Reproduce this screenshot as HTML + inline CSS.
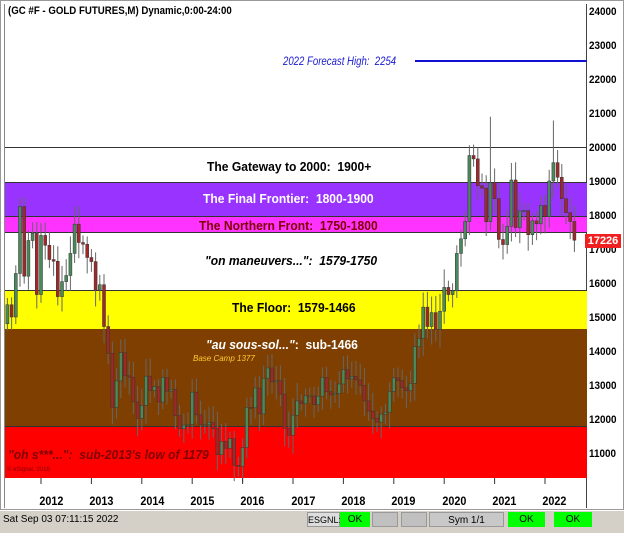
<!DOCTYPE html>
<html><head><style>
body{margin:0;width:624px;height:532px;overflow:hidden;background:#fff;font-family:"Liberation Sans",Arial,sans-serif;position:relative}
.a{position:absolute}
.band{position:absolute;left:5px;width:582px}
.t{position:absolute;font-weight:bold;font-size:13px;white-space:nowrap;transform:scaleX(.93);transform-origin:left}
.pl{position:absolute;left:589px;font-size:11px;font-weight:bold;transform:scaleX(.9);transform-origin:left}
.yl{position:absolute;top:494px;font-size:12px;font-weight:bold;transform:scaleX(.9)}
.sb{position:absolute;top:512px;height:15px;font-size:10px;line-height:15px;text-align:center;box-sizing:border-box}
</style></head><body>
<div class="a" style="left:0;top:0;width:624px;height:510px;border:1px solid #999;box-sizing:border-box"></div>
<div class="a" style="left:4px;top:4px;width:1px;height:504px;background:#888"></div>
<div class="a" style="left:586px;top:4px;width:1px;height:504px;background:#444"></div>
<div class="band" style="top:147px;height:1px;background:#333"></div>
<div class="band" style="top:182px;height:34px;background:#9933ff;border-top:1px solid #333;box-sizing:border-box"></div>
<div class="band" style="top:216px;height:17px;background:#ff33ff;border-top:1px solid #333;border-bottom:1px solid #333;box-sizing:border-box"></div>
<div class="band" style="top:290px;height:39px;background:#ffff00;border-top:1px solid #333;box-sizing:border-box"></div>
<div class="band" style="top:329px;height:98px;background:#7f3f00"></div>
<div class="band" style="top:426px;height:52px;background:#ff0000;border-top:1px solid #333;box-sizing:border-box"></div>
<svg class="a" style="left:0;top:0" width="624" height="532" id="sv">
<line x1="415" y1="61" x2="587" y2="61" stroke="#1010d0" stroke-width="2"/>
</svg>
<div class="a" style="left:8px;top:5px;font-size:11px;font-weight:bold;transform:scaleX(.88);transform-origin:left">(GC #F - GOLD FUTURES,M) Dynamic,0:00-24:00</div>
<div class="a" style="left:283px;top:54px;font-size:12px;font-style:italic;color:#1a1ad0;transform:scaleX(.8);transform-origin:left">2022 Forecast High:&nbsp; 2254</div>
<div class="t" style="left:207px;top:159px">The Gateway to 2000:&nbsp; 1900+</div>
<div class="t" style="left:203px;top:191px;color:#fff">The Final Frontier:&nbsp; 1800-1900</div>
<div class="t" style="left:199px;top:218px;color:#7f0000">The Northern Front:&nbsp; 1750-1800</div>
<div class="t" style="left:205px;top:253px;font-style:italic">"on maneuvers...":&nbsp; 1579-1750</div>
<div class="t" style="left:232px;top:300px">The Floor:&nbsp; 1579-1466</div>
<div class="t" style="left:206px;top:337px;color:#fff"><i>"au sous-sol..."</i>:&nbsp; sub-1466</div>
<div class="a" style="left:193px;top:354px;font-size:8px;font-style:italic;color:#ffcc33">Base Camp 1377</div>
<div class="t" style="left:8px;top:447px;font-style:italic;color:#7f0000">"oh s***...":&nbsp; sub-2013's low of 1179</div>
<div class="a" style="left:7px;top:467px;font-size:6px;color:#7f0000">© eSignal, 2016</div>
<div class="pl" style="top:6px">24000</div><div class="pl" style="top:40px">23000</div><div class="pl" style="top:74px">22000</div><div class="pl" style="top:108px">21000</div><div class="pl" style="top:142px">20000</div><div class="pl" style="top:176px">19000</div><div class="pl" style="top:210px">18000</div><div class="pl" style="top:244px">17000</div><div class="pl" style="top:278px">16000</div><div class="pl" style="top:312px">15000</div><div class="pl" style="top:346px">14000</div><div class="pl" style="top:380px">13000</div><div class="pl" style="top:414px">12000</div><div class="pl" style="top:448px">11000</div>
<div class="a" style="left:585px;top:234px;width:36px;height:14px;background:#f02020;color:#fff;font-size:11px;font-weight:bold;line-height:14px;text-align:center">17226</div>
<div class="yl" style="left:38px">2012</div><div class="yl" style="left:88px">2013</div><div class="yl" style="left:139px">2014</div><div class="yl" style="left:189px">2015</div><div class="yl" style="left:239px">2016</div><div class="yl" style="left:290px">2017</div><div class="yl" style="left:340px">2018</div><div class="yl" style="left:390px">2019</div><div class="yl" style="left:441px">2020</div><div class="yl" style="left:491px">2021</div><div class="yl" style="left:541px">2022</div>
<div class="a" style="left:0;top:510px;width:624px;height:22px;background:#d4d0c8;border-top:1px solid #fff"></div>
<div class="sb" style="left:3px;text-align:left">Sat Sep 03 07:11:15 2022</div>
<div class="sb" style="left:307px;width:33px;background:#ddd;border:1px solid #999;font-size:9px">ESGNL:</div>
<div class="sb" style="left:340px;width:30px;background:#00ff00">OK</div>
<div class="sb" style="left:372px;width:26px;background:#c0c0c0;border:1px solid #999"></div>
<div class="sb" style="left:401px;width:26px;background:#c0c0c0;border:1px solid #999"></div>
<div class="sb" style="left:429px;width:75px;background:#c8c8c8;border:1px solid #999">Sym 1/1</div>
<div class="sb" style="left:508px;width:37px;background:#00ff00">OK</div>
<div class="sb" style="left:554px;width:38px;background:#00ff00">OK</div>
<script>
var c=[1536,1500,1628,1825,1620,1725,1746,1566,
1740,1711,1669,1664,1560,1604,1622,1687,1773,1719,1714,1675,
1663,1579,1595,1472,1393,1234,1312,1395,1327,1323,1250,1202,
1240,1326,1284,1295,1250,1322,1282,1287,1210,1171,1182,1184,
1279,1212,1183,1183,1190,1172,1095,1134,1114,1142,1064,1061,
1116,1234,1233,1291,1215,1320,1350,1309,1313,1273,1173,1152,
1211,1253,1245,1268,1268,1242,1267,1322,1280,1271,1275,1303,
1345,1318,1325,1315,1299,1253,1223,1202,1191,1214,1220,1281,
1321,1313,1292,1283,1305,1413,1437,1529,1472,1513,1464,1517,
1587,1566,1577,1687,1730,1781,1975,1965,1886,1879,1780,1895,
1848,1728,1713,1767,1903,1763,1812,1813,1742,1783,1774,1828,
1795,1900,1954,1911,1848,1807,1781,1726];
var s='',o=1480,Y=function(p){return 147+(2000-p)*0.34};
for(var i=0;i<c.length;i++){var x=41+(i-8)*4.2,cl=c[i],hi=Math.max(o,cl)+20+(i*37%35),lo=Math.min(o,cl)-20-(i*53%35);
if(i==115)hi=2089;if(i==130)hi=2078;
var up=cl>=o,t=Y(Math.max(o,cl)),b=Y(Math.min(o,cl));
s+='<line x1="'+x+'" x2="'+x+'" y1="'+Y(hi)+'" y2="'+Y(lo)+'" stroke="#666"/>';
s+='<rect x="'+(x-1.5)+'" y="'+t+'" width="3" height="'+Math.max(1,b-t)+'" fill="'+(up?'#4a8a5a':'#a02828')+'" stroke="#333" stroke-width=".5"/>';o=cl;}
for(var k=0;k<11;k++){var tx=41+k*50.4;s+='<line x1="'+tx+'" x2="'+tx+'" y1="478" y2="484" stroke="#333"/>';}
document.getElementById('sv').insertAdjacentHTML('beforeend',s);
</script>
</body></html>
